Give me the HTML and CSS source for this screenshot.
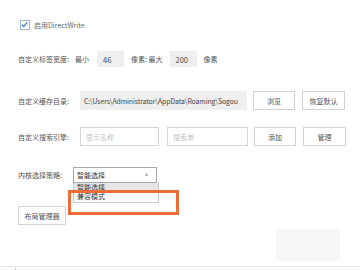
FILE: index.html
```html
<!DOCTYPE html>
<html lang="zh-CN">
<head>
    <meta charset="UTF-8">
    <title>高级设置</title>
    <link rel="stylesheet" href="styles.css">
</head>
<body>
    <div class="panel">
        <!-- DirectWrite -->
        <div class="row row-check">
            <span class="checkbox">
                <svg width="9" height="9" viewBox="0 0 9 9"><path d="M1.8 4.6 L3.7 6.5 L7.4 2.4" fill="none" stroke="#3b7fd6" stroke-width="1.3"/></svg>
            </span>
            <span class="check-text">启用DirectWrite</span>
        </div>

        <!-- 标签宽度 -->
        <div class="row row-width">
            <span class="label">自定义标签宽度:</span>
            <span class="text min">最小</span>
            <span class="field gray num">46</span>
            <span class="text unit">像素: 最大</span>
            <span class="field gray num">200</span>
            <span class="text unit">像素</span>
        </div>

        <!-- 缓存目录 -->
        <div class="row row-cache">
            <span class="label">自定义缓存目录:</span>
            <span class="field gray path">C:\Users\Administrator\AppData\Roaming\Sogou</span>
            <button class="btn">浏览</button>
            <button class="btn">恢复默认</button>
        </div>

        <!-- 搜索引擎 -->
        <div class="row row-search">
            <span class="label">自定义搜索引擎:</span>
            <span class="field line name">显示名称</span>
            <span class="field line query">搜索串</span>
            <button class="btn">添加</button>
            <button class="btn">管理</button>
        </div>

        <!-- 内核选择 -->
        <div class="row row-core">
            <span class="label short">内核选择策略:</span>
            <div class="select">
                <span>智能选择</span>
                <span class="caret">^</span>
                <div class="options">
                    <div class="option active">智能选择</div>
                    <div class="option">兼容模式</div>
                </div>
                <div class="mark"></div>
            </div>
        </div>

        <div class="row row-layout">
            <button class="btn layout-btn">布局管理器</button>
        </div>

        <div class="ghost-row">
            <div class="ghost"></div>
        </div>
    </div>
    <div class="status">
        <span>地</span><span class="sep"></span><span>人 ·</span>
    </div>
</body>
</html>
```

FILE: styles.css
```css
body {
    margin: 0;
    width: 360px;
    height: 270px;
    overflow: hidden;
    background-color: #fff;
    font-family: "Noto Sans CJK SC", "Noto Sans", sans-serif;
    font-size: 7px;
    color: #555;
}

.panel {
    padding: 20px 0 0 18px;
    height: 266px;
    box-sizing: border-box;
}

.row {
    display: flex;
    align-items: center;
}

.row-check {
    height: 9px;
    padding-left: 2px;
}

.checkbox {
    width: 8px;
    height: 8px;
    border: 1px solid #9cb6d8;
    background-color: #fff;
    display: flex;
}

.checkbox svg {
    margin: -1px 0 0 -1px;
}

.check-text {
    margin-left: 4px;
    color: #666;
}

.row-width {
    margin-top: 22px;
    height: 16px;
}

.row-width .label {
    width: 57px;
}

.min {
    margin-right: 8px;
}

.field {
    height: 100%;
    display: flex;
    align-items: center;
    box-sizing: border-box;
    white-space: nowrap;
    overflow: hidden;
}

.gray {
    background-color: #efefef;
}

.num {
    width: 27px;
    padding-left: 6px;
    color: #444;
    font-size: 7.5px;
}

.unit {
    margin: 0 7px;
}

.row-cache {
    margin-top: 24px;
    height: 19px;
}

.row-cache .label,
.row-search .label {
    width: 62px;
}

.path {
    width: 167px;
    padding-left: 4px;
    font-size: 6.9px;
    letter-spacing: -0.1px;
    color: #444;
}

.btn {
    height: 100%;
    width: 43px;
    margin-left: 7px;
    padding: 0;
    border: 1px solid #d2d2d2;
    background-color: #fff;
    font-family: inherit;
    font-size: 7px;
    color: #555;
}

.row-cache .btn:first-of-type,
.row-search .btn:first-of-type {
    margin-left: 6px;
    width: 42px;
}

.row-search {
    margin-top: 17px;
    height: 19px;
}

.line {
    border: 1px solid #d4d4d4;
    padding-left: 5px;
    color: #c4c4c4;
}

.name {
    width: 79px;
}

.query {
    width: 81px;
    margin-left: 8px;
}

.row-core {
    margin-top: 21px;
    height: 16px;
}

.short {
    width: 55px;
}

.select {
    position: relative;
    width: 84px;
    height: 100%;
    box-sizing: border-box;
    border: 1px solid #a9a9a9;
    display: flex;
    align-items: center;
    justify-content: space-between;
    padding: 0 8px 0 3px;
    color: #333;
}

.caret {
    font-size: 6px;
    color: #444;
}

.options {
    position: absolute;
    top: 15px;
    left: -1px;
    width: 84px;
    border: 1px solid #c8c8c8;
    border-top: none;
    background-color: #fff;
}

.option {
    height: 11px;
    line-height: 11px;
    padding-left: 3px;
    color: #333;
}

.option.active {
    height: 8px;
    line-height: 8px;
    background-color: #e6e6e6;
}

.mark {
    position: absolute;
    top: 22px;
    left: -6px;
    width: 105px;
    height: 19px;
    border: 3px solid #ec6c35;
}

.row-layout {
    margin-top: 23px;
    height: 19px;
}

.layout-btn {
    margin-left: 0;
    width: 48px;
}

.ghost-row {
    display: flex;
    justify-content: flex-end;
    padding-right: 20px;
    margin-top: 4px;
}

.ghost {
    width: 64px;
    height: 32px;
    background-color: #f6f6f6;
}

.status {
    border-top: 1px solid #e4e4e4;
    display: flex;
    align-items: flex-start;
    gap: 6px;
    padding: 1px 0 0 2px;
    height: 4px;
    color: #888;
}

.sep {
    width: 1px;
    height: 6px;
    background-color: #ccc;
}
```
